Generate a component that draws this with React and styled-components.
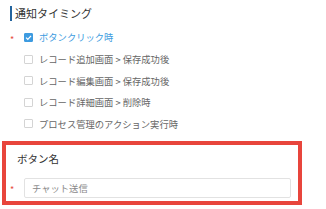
import React from 'react';
import styled, { createGlobalStyle } from 'styled-components';

const Global = createGlobalStyle`
  body {
    margin: 0;
    background: #fff;
    font-family: "Noto Sans CJK JP", "Noto Sans", sans-serif;
  }
`;

const opciones = [
    { texto: 'ボタンクリック時', marcado: true, requerido: true },
    { texto: 'レコード追加画面 > 保存成功後' },
    { texto: 'レコード編集画面 > 保存成功後' },
    { texto: 'レコード詳細画面 > 削除時' },
    { texto: 'プロセス管理のアクション実行時' },
];

const App = () => {
    return (
        <Page>
            <Global />
            <Titulo>通知タイミング</Titulo>
            <Lista>
                {opciones.map((item, index) => (
                    <Fila key={index}>
                        <Marca>{item.requerido ? '*' : ''}</Marca>
                        <Caja marcado={item.marcado}>
                            {item.marcado && (
                                <svg width="7" height="7" viewBox="0 0 10 10">
                                    <path d="M1.5 5.2 L4 7.6 L8.6 2.6" fill="none" stroke="#fff" strokeWidth="1.8" />
                                </svg>
                            )}
                        </Caja>
                        <Etiqueta marcado={item.marcado}>{item.texto}</Etiqueta>
                    </Fila>
                ))}
            </Lista>
            <Tarjeta>
                <TituloTarjeta>ボタン名</TituloTarjeta>
                <FilaInput>
                    <MarcaInput>*</MarcaInput>
                    <Campo defaultValue="チャット送信" />
                </FilaInput>
            </Tarjeta>
        </Page>
    );
};

const Page = styled.div`
    width: 326px;
    height: 209px;
    overflow: hidden;
    padding-top: 6px;
    box-sizing: border-box;
`;
const Titulo = styled.div`
    margin-left: 10px;
    padding-left: 3px;
    border-left: 2.5px solid #23649e;
    height: 15px;
    line-height: 15px;
    font-size: 11px;
    color: #333;
`;
const Lista = styled.div`
    margin-top: 5.7px;
    display: flex;
    flex-direction: column;
`;
const Fila = styled.div`
    display: flex;
    align-items: center;
    height: 21.6px;
    padding-left: 10px;
`;
const Marca = styled.div`
    width: 14px;
    font-size: 9px;
    line-height: 9px;
    color: #e74c3c;
    padding-top: 4px;
`;
const Caja = styled.div`
    width: 9px;
    height: 9px;
    box-sizing: border-box;
    border-radius: 1px;
    display: flex;
    align-items: center;
    justify-content: center;
    background: ${p => (p.marcado ? '#3d9be0' : '#fff')};
    border: 1px solid ${p => (p.marcado ? '#3d9be0' : '#d4d4d4')};
`;
const Etiqueta = styled.span`
    margin-left: 6px;
    font-size: 9.3px;
    color: ${p => (p.marcado ? '#3d9be0' : '#666')};
    white-space: nowrap;
`;
const Tarjeta = styled.div`
    margin: 6px 0 0 2px;
    width: 300px;
    box-sizing: border-box;
    border: 4px solid #e8453c;
    padding: 6px 0 3px 0;
`;
const TituloTarjeta = styled.div`
    padding-left: 11px;
    height: 16px;
    line-height: 16px;
    font-size: 10.5px;
    color: #333;
`;
const FilaInput = styled.div`
    display: flex;
    align-items: center;
    margin-top: 11px;
`;
const MarcaInput = styled.div`
    width: 18px;
    box-sizing: border-box;
    padding: 4px 0 0 4px;
    font-size: 9px;
    line-height: 9px;
    color: #e74c3c;
`;
const Campo = styled.input`
    width: 267px;
    height: 20px;
    box-sizing: border-box;
    border: 1px solid #e2e2e2;
    border-radius: 2px;
    padding: 0 7px;
    font-family: "Noto Sans CJK JP", sans-serif;
    font-size: 9.3px;
    color: #888;
    outline: none;
`;

export default App;
